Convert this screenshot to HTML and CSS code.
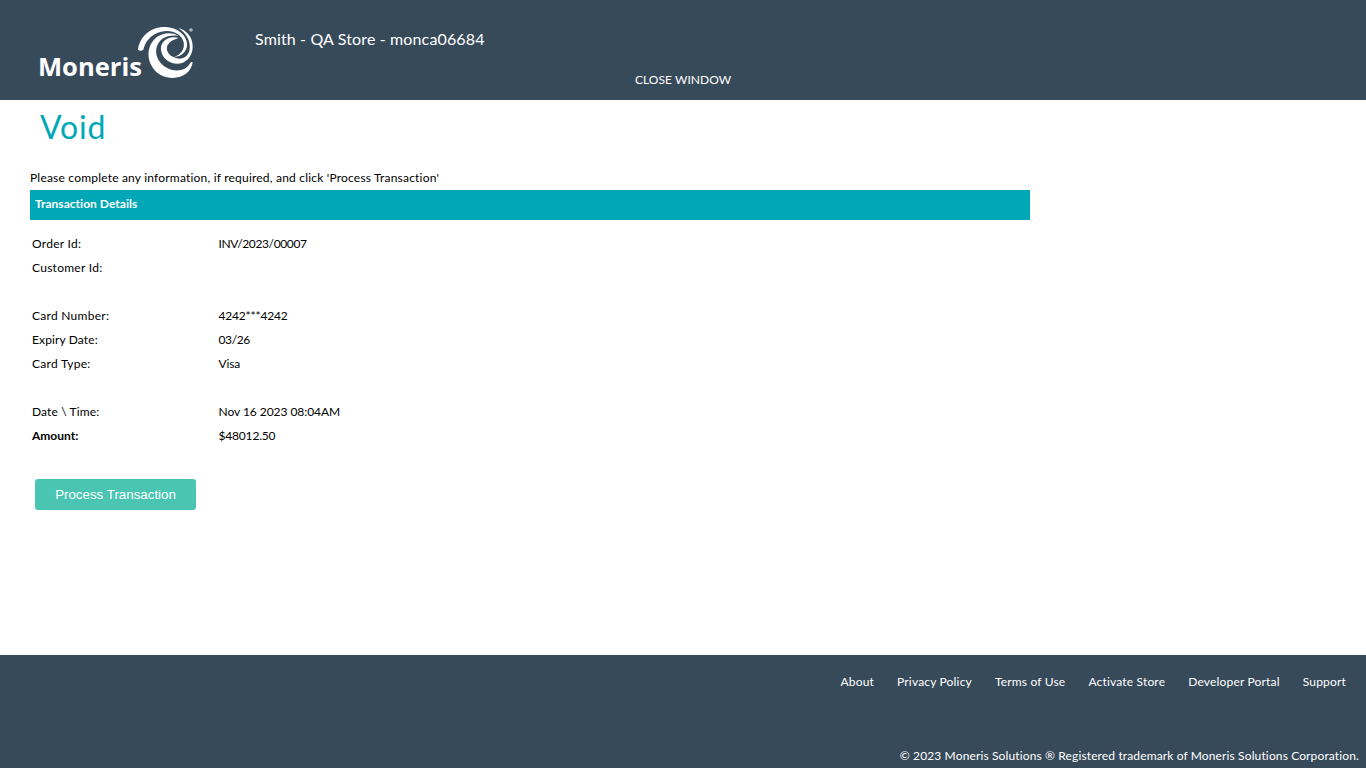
FILE: index.html
```
<!DOCTYPE html>
<html lang="en">
<head>
<meta charset="utf-8">
<title>Void</title>
<link rel="stylesheet" href="styles.css">
</head>
<body>
<header class="header">
  <svg class="logo" viewBox="24 27 480 180" role="img" aria-label="Moneris">
    <text class="wordmark" x="24" y="183" textLength="312" lengthAdjust="spacingAndGlyphs">Moneris</text>
    <g class="swirl">
      <path d="M324 104C329 65 362 34 407 36C437 38 463 53 470 79C477 105 456 126 432 126C452 120 465 103 461 82C455 55 423 42 393 50C360 59 345 82 340 104Q332 110 324 104Z"/>
      <path d="M445 62C408 43 366 63 357 103C348 146 380 189 428 189C461 188 484 170 488 142Q484 139 480 145C466 170 433 173 406 156C373 134 370 94 396 72C411 61 428 60 445 62Z"/>
      <path d="M446 69C416 60 390 79 393 105C397 135 428 153 457 144C483 134 495 103 484 73C477 55 462 43 445 40C467 52 483 78 479 103C475 128 452 138 432 127C405 116 398 82 446 69Z"/>
    </g>
    <circle class="mark" cx="483" cy="45" r="5.5"/>
  </svg>
  <div class="store">Smith - QA Store - monca06684</div>
  <a class="close">CLOSE WINDOW</a>
</header>
<main class="main">
  <h1 class="title">Void</h1>
  <p class="intro">Please complete any information, if required, and click 'Process Transaction'</p>
  <h2 class="section">Transaction Details</h2>
  <dl class="details">
    <dt>Order Id:</dt><dd class="order">INV/2023/00007</dd>
    <dt>Customer Id:</dt><dd></dd>
    <dt></dt><dd></dd>
    <dt>Card Number:</dt><dd>4242***4242</dd>
    <dt class="tight">Expiry Date:</dt><dd class="order">03/26</dd>
    <dt>Card Type:</dt><dd>Visa</dd>
    <dt></dt><dd></dd>
    <dt class="tight">Date \ Time:</dt><dd class="date">Nov 16 2023 08:04AM</dd>
    <dt class="amount">Amount:</dt><dd>$48012.50</dd>
  </dl>
  <button class="process">Process Transaction</button>
</main>
<footer class="footer">
  <nav class="links"><a>About</a><a>Privacy Policy</a><a>Terms of Use</a><a>Activate Store</a><a>Developer Portal</a><a>Support</a></nav>
  <p class="copyright">© 2023 Moneris Solutions ® Registered trademark of Moneris Solutions Corporation.</p>
</footer>
</body>
</html>
```
FILE: styles.css
```
* { box-sizing: border-box; }
body { margin: 0; height: 768px; display: flex; flex-direction: column; overflow: hidden; background: #fff; color: #000; font-family: Lato, sans-serif; font-size: 12px; line-height: 24px; white-space: nowrap; }
.header { height: 100px; flex: none; display: grid; grid-template-columns: 217px 380px 1fr; padding: 24px 0 0 38px; background: #374a5a; color: #fff; }
.logo { width: 160px; height: 60px; overflow: visible; }
.wordmark { font: 700 76px "Open Sans", sans-serif; fill: #fff; }
.swirl { fill: #fff; }
.mark { fill: #aab2ba; }
.store { font-size: 16px; line-height: 30px; letter-spacing: .14px; }
.close { margin-top: 44px; letter-spacing: .04px; }
.main { flex: 1; padding-left: 30px; }
.title { margin: 7px 0 0 10px; font-size: 32px; line-height: 40px; font-weight: 400; letter-spacing: .8px; color: #00a8b7; }
.intro { margin: 19px 0 0; letter-spacing: .2px; }
.section { margin: 0; width: 1000px; height: 30px; padding-left: 5px; line-height: 28px; font-size: 12px; font-weight: 700; letter-spacing: .03px; background: #00a8b7; color: #fff; }
.details { margin: 12px 0 0 2px; display: grid; grid-template-columns: 186.5px 1fr; grid-auto-rows: 24px; letter-spacing: .27px; }
.details dd { margin: 0; letter-spacing: -.18px; }
.details .order { letter-spacing: -.38px; }
.details .date { letter-spacing: -.05px; }
.details .tight { letter-spacing: .12px; }
.details .amount { font-weight: 700; letter-spacing: 0; }
.process { display: block; margin: 31px 0 0 5px; width: 161px; height: 31px; padding: 0; border: 0; border-radius: 3px; background: #4bc5b3; color: #fff; font: 13.333px "Liberation Sans", Arial, sans-serif; }
.footer { flex: none; height: 113px; padding: 15px 7px 0 0; display: flex; flex-direction: column; align-items: flex-end; background: #374a5a; color: #fff; }
.links { display: flex; gap: 23px; padding-right: 13px; letter-spacing: .18px; }
.copyright { margin: 50px 0 0; letter-spacing: .13px; }
```
